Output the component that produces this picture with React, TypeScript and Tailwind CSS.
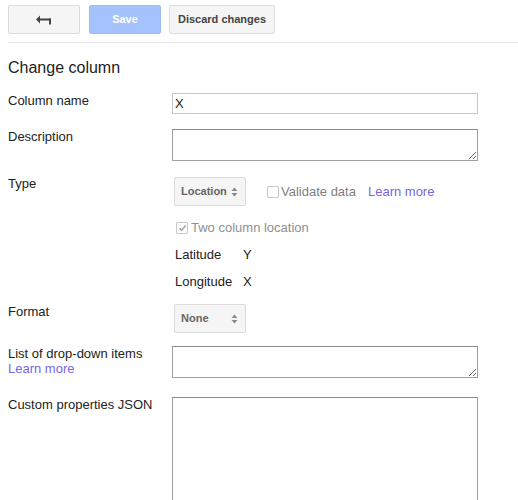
import React from "react";

function SelectArrows() {
  return (
    <svg width="7" height="10" viewBox="0 0 7 10" className="block">
      <polygon points="0.5,4 3.5,0.5 6.5,4" fill="#8a8a8a" />
      <polygon points="0.5,6 3.5,9.5 6.5,6" fill="#8a8a8a" />
    </svg>
  );
}

function FakeSelect({ label }: { label: string }) {
  return (
    <div className="ml-[2px] flex h-[29px] w-[72px] shrink-0 items-center justify-between rounded-[2px] border border-[#dcdcdc] bg-[#f5f5f5] pl-[6px] pr-[7px] text-[11px] font-bold text-[#666]">
      <span>{label}</span>
      <SelectArrows />
    </div>
  );
}

function CheckBox({ checked }: { checked?: boolean }) {
  return (
    <div className="flex h-[12px] w-[12px] shrink-0 items-center justify-center rounded-[1px] border border-[#c8c8c8] bg-white">
      {checked && (
        <svg width="9" height="8" viewBox="0 0 9 8" className="block">
          <path d="M1.5 4.2 L3.6 6.3 L7.6 1.5" fill="none" stroke="#999" strokeWidth="1.3" />
        </svg>
      )}
    </div>
  );
}

export default function App() {
  return (
    <div className="h-[500px] overflow-hidden bg-white font-['Liberation_Sans',Arial,sans-serif] text-[13px] text-[#222]">
      <div className="ml-2 flex border-b border-[#e5e5e5] pb-[8px] pt-[5px]">
        <button className="flex h-[29px] w-[72px] items-center justify-center rounded-[2px] border border-[#dcdcdc] bg-[#f5f5f5]">
          <svg width="16" height="12" viewBox="0 0 16 12" className="block">
            <polygon points="0,5.5 4,1.5 4,9.5" fill="#444" />
            <rect x="3" y="4.5" width="12" height="2" fill="#444" />
            <rect x="13" y="4.5" width="2" height="6" fill="#444" />
          </svg>
        </button>
        <button className="ml-[9px] flex h-[29px] w-[72px] items-center justify-center rounded-[2px] border border-[#9dbdf9] bg-[#a4c2fc] text-[11px] font-bold text-white">
          Save
        </button>
        <button className="ml-[8px] flex h-[29px] w-[106px] items-center justify-center rounded-[2px] border border-[#dcdcdc] bg-[#f5f5f5] text-[11px] font-bold text-[#444]">
          Discard changes
        </button>
      </div>

      <div className="pl-2">
        <div className="mt-[15px] text-[16px] leading-[20px] text-[#222]">Change column</div>

        <div className="mt-[15px] flex items-start">
          <div className="w-[164px] shrink-0 leading-[16px]">Column name</div>
          <input
            defaultValue="X"
            className="h-[21px] w-[306px] border border-[#c6c6c6] px-[2px] text-[13px] leading-[19px] text-[#222] outline-none"
          />
        </div>

        <div className="mt-[15px] flex items-start">
          <div className="w-[164px] shrink-0 leading-[16px]">Description</div>
          <textarea className="block h-[32px] w-[306px] border border-[#a0a0a0] border-t-[#8a8a8a] text-[13px] outline-none" />
        </div>

        <div className="mt-[16px] flex items-start">
          <div className="mt-[-1px] w-[164px] shrink-0 leading-[16px]">Type</div>
          <div className="flex flex-col">
            <div className="flex items-center">
              <FakeSelect label="Location" />
              <div className="ml-[21px] flex items-center">
                <CheckBox />
                <span className="ml-[2px] leading-[16px] text-[#808080]">Validate data</span>
              </div>
              <span className="ml-[12px] leading-[16px] text-[#7765e3]">Learn more</span>
            </div>
            <div className="ml-[4px] mt-[14px] flex items-center leading-[16px]">
              <CheckBox checked />
              <span className="ml-[3px] text-[#909090]">Two column location</span>
            </div>
            <div className="ml-[3px] mt-[11px] flex leading-[16px]">
              <span className="w-[68px]">Latitude</span>
              <span>Y</span>
            </div>
            <div className="ml-[3px] mt-[11px] flex leading-[16px]">
              <span className="w-[68px]">Longitude</span>
              <span>X</span>
            </div>
          </div>
        </div>

        <div className="mt-[14px] flex items-start">
          <div className="w-[164px] shrink-0 leading-[16px]">Format</div>
          <FakeSelect label="None" />
        </div>

        <div className="mt-[13px] flex items-start">
          <div className="w-[164px] shrink-0 leading-[15px]">
            <div>List of drop-down items</div>
            <div className="text-[#7765e3]">Learn more</div>
          </div>
          <textarea className="block h-[32px] w-[306px] border border-[#a0a0a0] border-t-[#8a8a8a] text-[13px] outline-none" />
        </div>

        <div className="mt-[19px] flex items-start">
          <div className="w-[164px] shrink-0 leading-[16px]">Custom properties JSON</div>
          <textarea className="block h-[130px] w-[306px] border border-[#a0a0a0] border-t-[#8a8a8a] text-[13px] outline-none" />
        </div>
      </div>
    </div>
  );
}
